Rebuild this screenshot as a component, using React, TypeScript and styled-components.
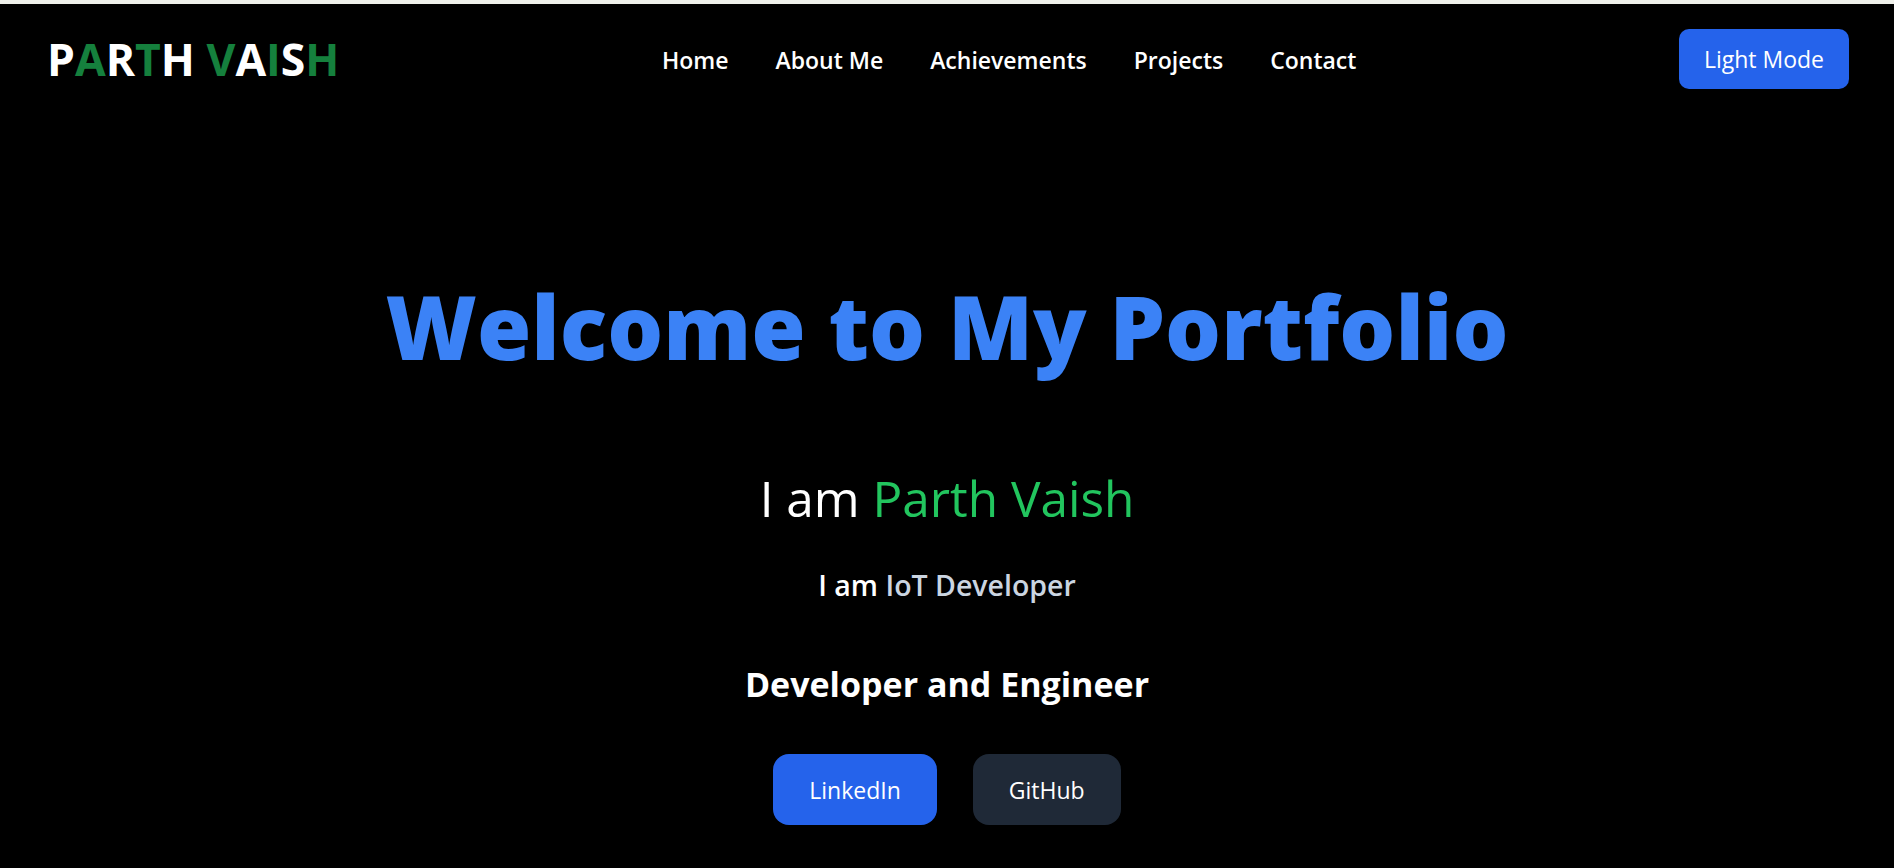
import styled, { createGlobalStyle } from 'styled-components';

const GlobalStyle = createGlobalStyle`
  html, body {
    margin: 0;
    padding: 0;
    background: #000000;
  }
  body {
    font-family: 'Open Sans', 'Noto Sans', sans-serif;
    color: #ffffff;
  }
  * {
    box-sizing: border-box;
  }
`;

const logoLetters = 'PARTH VAISH'.split('');
const navLinks = ['Home', 'About Me', 'Achievements', 'Projects', 'Contact'];

export default function App() {
  let colorIndex = 0;
  return (
    <>
      <GlobalStyle />
      <Page>
        <TopEdge />
        <Header>
          <Logo>
            {logoLetters.map((ch, i) => {
              if (ch === ' ') return <span key={i}> </span>;
              // letters alternate white / green, the space is skipped
              const green = colorIndex++ % 2 === 1;
              return (
                <LogoLetter key={i} $green={green}>
                  {ch}
                </LogoLetter>
              );
            })}
          </Logo>
          <Nav>
            {navLinks.map((link) => (
              <NavLink key={link} href="#">
                {link}
              </NavLink>
            ))}
          </Nav>
          <ModeButton>Light Mode</ModeButton>
        </Header>
        <Hero>
          <Title>Welcome to My Portfolio</Title>
          <Intro>
            I am <Name>Parth Vaish</Name>
          </Intro>
          <Role>
            I am <RoleText>IoT Developer</RoleText>
          </Role>
          <Tagline>Developer and Engineer</Tagline>
          <Actions>
            <ActionButton $variant="primary">LinkedIn</ActionButton>
            <ActionButton $variant="dark">GitHub</ActionButton>
          </Actions>
        </Hero>
      </Page>
    </>
  );
}

const Page = styled.div`
  min-height: 868px;
  background: #000000;
`;

const TopEdge = styled.div`
  height: 4px;
  background: #f0f1eb;
`;

const Header = styled.header`
  display: flex;
  align-items: center;
  justify-content: space-between;
  padding: 25px 45px;
`;

const Logo = styled.div`
  font-size: 44.5px;
  font-weight: 700;
  line-height: 1;
  white-space: pre;
  padding-left: 2px;
`;

const LogoLetter = styled.span<{ $green: boolean }>`
  color: ${(p) => (p.$green ? '#15803d' : '#ffffff')};
`;

const Nav = styled.nav`
  display: flex;
  align-items: center;
  gap: 47px;
  padding-top: 2px;
`;

const NavLink = styled.a`
  color: #ffffff;
  text-decoration: none;
  font-size: 23px;
  font-weight: 600;
  line-height: 1;
`;

const ModeButton = styled.button`
  height: 60px;
  padding: 0 25px;
  border: none;
  border-radius: 10px;
  background: #2563eb;
  color: #ffffff;
  font-family: 'Open Sans', 'Noto Sans', sans-serif;
  font-size: 23px;
  font-weight: 400;
  cursor: pointer;
`;

const Hero = styled.main`
  display: flex;
  flex-direction: column;
  align-items: center;
  padding-top: 168px;
  text-align: center;
`;

const Title = styled.h1`
  margin: 0;
  font-size: 88px;
  font-weight: 800;
  line-height: 1;
  color: #3b82f6;
`;

const Intro = styled.h2`
  margin: 104px 0 0;
  font-size: 49.5px;
  font-weight: 400;
  line-height: 1;
  color: #ffffff;
`;

const Name = styled.span`
  color: #22c55e;
`;

const Role = styled.p`
  margin: 47px 0 0;
  font-size: 28.5px;
  font-weight: 600;
  line-height: 1;
  color: #ffffff;
`;

const RoleText = styled.span`
  color: #cbd5e1;
`;

const Tagline = styled.h3`
  margin: 68px 0 0;
  font-size: 34px;
  font-weight: 700;
  line-height: 1;
  color: #ffffff;
`;

const Actions = styled.div`
  display: flex;
  gap: 36px;
  margin-top: 53px;
`;

const ActionButton = styled.button<{ $variant: 'primary' | 'dark' }>`
  height: 71px;
  padding: 0 36px;
  border: none;
  border-radius: 16px;
  background: ${(p) => (p.$variant === 'primary' ? '#2563eb' : '#1f2937')};
  color: #ffffff;
  font-family: 'Open Sans', 'Noto Sans', sans-serif;
  font-size: 23px;
  font-weight: 400;
  cursor: pointer;
`;
